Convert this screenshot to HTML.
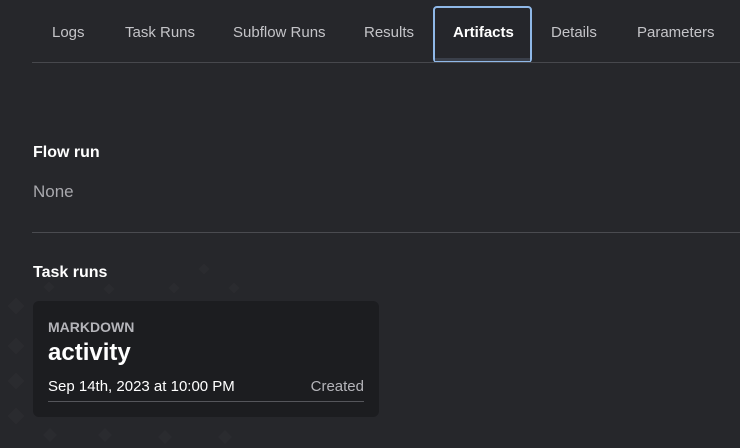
<!DOCTYPE html>
<html><head><style>
*{margin:0;padding:0;box-sizing:border-box}
body{width:740px;height:448px;background:#26272b;font-family:"Liberation Sans",sans-serif;position:relative;overflow:hidden;color:#fff}
.t{position:absolute;font-size:15px;color:#c4c4c8;top:24px}
.a{position:absolute;left:433px;top:6px;width:99px;height:57px;border:2px solid #8fb8e8;border-radius:4px;background:#25262b}
.a span{position:absolute;left:18px;top:16px;font-size:15px;font-weight:bold;color:#fff}
.a i{position:absolute;left:0;right:0;bottom:0;height:3px;background:#3a3f4a}
.ln{position:absolute;left:32px;right:0;height:1px;background:#47484d}
.h{position:absolute;left:33px;font-size:16px;font-weight:bold;color:#fff}
.card{position:absolute;left:33px;top:301px;width:346px;height:116px;background:#1c1d20;border-radius:6px}
</style></head><body>
<svg width="740" height="448" style="position:absolute;left:0;top:0">
<g fill="#2a2b2f">
<rect x="10" y="300" width="12" height="12" transform="rotate(45 16 306)"/>
<rect x="10" y="340" width="12" height="12" transform="rotate(45 16 346)"/>
<rect x="10" y="375" width="12" height="12" transform="rotate(45 16 381)"/>
<rect x="10" y="410" width="12" height="12" transform="rotate(45 16 416)"/>
<rect x="45" y="430" width="10" height="10" transform="rotate(45 50 435)"/>
<rect x="100" y="430" width="10" height="10" transform="rotate(45 105 435)"/>
<rect x="160" y="432" width="10" height="10" transform="rotate(45 165 437)"/>
<rect x="220" y="432" width="10" height="10" transform="rotate(45 225 437)"/>
<rect x="45" y="283" width="8" height="8" transform="rotate(45 49 287)"/>
<rect x="105" y="285" width="8" height="8" transform="rotate(45 109 289)"/>
<rect x="170" y="284" width="8" height="8" transform="rotate(45 174 288)"/>
<rect x="200" y="265" width="8" height="8" transform="rotate(45 204 269)"/>
<rect x="230" y="284" width="8" height="8" transform="rotate(45 234 288)"/>
</g></svg>
<div class="t" style="left:52px">Logs</div>
<div class="t" style="left:125px">Task Runs</div>
<div class="t" style="left:233px">Subflow Runs</div>
<div class="t" style="left:364px">Results</div>
<div class="a"><span>Artifacts</span><i></i></div>
<div class="t" style="left:551px">Details</div>
<div class="t" style="left:637px">Parameters</div>
<div class="ln" style="top:62px"></div>
<div class="h" style="top:144px">Flow run</div>
<div style="position:absolute;left:33px;top:182px;font-size:17px;color:#a8a8ad">None</div>
<div class="ln" style="top:232px;background:#4a4b50"></div>
<div class="h" style="top:264px">Task runs</div>
<div class="card">
<div style="position:absolute;left:15px;top:18px;font-size:14px;font-weight:bold;color:#b5b5ba">MARKDOWN</div>
<div style="position:absolute;left:15px;top:38px;font-size:24px;font-weight:bold;color:#fff">activity</div>
<div style="position:absolute;left:15px;top:77px;font-size:15px;color:#fff">Sep 14th, 2023 at 10:00 PM</div>
<div style="position:absolute;right:15px;top:77px;font-size:15px;color:#b5b5ba">Created</div>
<div style="position:absolute;left:15px;right:15px;top:100px;height:1px;background:#55565b"></div>
</div>
</body></html>
